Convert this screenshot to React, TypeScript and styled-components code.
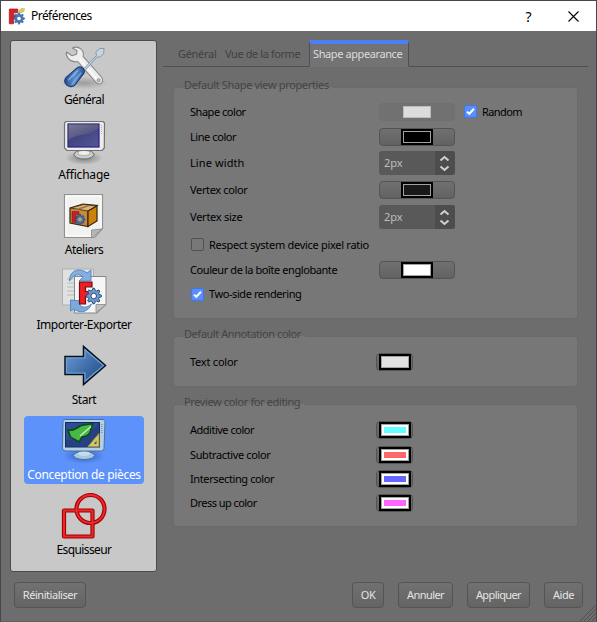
import React from 'react';
import styled, { createGlobalStyle, css } from 'styled-components';

const GlobalStyle = createGlobalStyle`
  * { box-sizing: border-box; }
  html, body { margin: 0; padding: 0; overflow: hidden; }
  body { background: #6d6d6d; }
`;

const uiFont = css`
  font-family: 'Noto Sans', 'Open Sans', sans-serif;
  white-space: nowrap;
`;

const Text = styled.span<{ $ls?: number }>`
  ${uiFont}
  letter-spacing: ${p => p.$ls ?? 0}px;
`;

const Window = styled.div`
  width: 597px;
  height: 622px;
  display: flex;
  flex-direction: column;
  background: #6d6d6d;
  border: 1px solid #48464a;
  border-bottom-color: #606060;
  font-size: 11px;
  line-height: 16px;
  color: #000;
`;

const TitleBar = styled.header`
  height: 30px;
  flex: none;
  display: flex;
  align-items: center;
  background: #fff;
  padding-left: 7px;
  font-size: 12px;
`;

const Title = styled(Text)`
  margin-left: 5px;
  flex: 1;
`;

const CaptionButton = styled.button`
  width: 45px;
  height: 30px;
  padding: 0;
  border: 0;
  background: none;
  display: grid;
  place-items: center;
  font: 14px 'Noto Sans', sans-serif;
  color: #000;
`;

const Content = styled.div`
  height: 541px;
  display: flex;
`;

const Sidebar = styled.nav`
  width: 147px;
  height: 532px;
  margin: 9px 0 0 9px;
  padding: 0 13px;
  border: 1px solid #4b4b4b;
  border-radius: 3px;
  background: #c8c8c8;
`;

const SideItem = styled.div<{ $active?: boolean }>`
  width: 120px;
  height: 68px;
  margin-bottom: 7px;
  display: flex;
  flex-direction: column;
  align-items: center;
  border-radius: 4px;
  background: ${p => (p.$active ? '#5e92fb' : 'transparent')};
  color: ${p => (p.$active ? '#fff' : '#000')};
  font-size: 12px;
  svg { display: block; flex: none; }
  span { margin-top: 3px; }
`;

const Pane = styled.main`
  margin-left: 6px;
  width: 425px;
  padding-top: 9px;
`;

const TabBar = styled.div`
  height: 27px;
  display: flex;
`;

const Tab = styled.div<{ $width: number; $active?: boolean; $pad: number }>`
  width: ${p => p.$width}px;
  padding: ${p => (p.$active ? 2 : 6)}px 0 0 ${p => p.$pad}px;
  color: ${p => (p.$active ? '#dcdcdc' : '#414141')};
  border-bottom: 1px solid ${p => (p.$active ? 'transparent' : '#4f4f4f')};
  ${p => p.$active && css`
    border-top: 4px solid #4b7ff2;
    border-left: 1px solid #4f4f4f;
    border-right: 1px solid #4f4f4f;
    background: #737373;
  `}
`;

const TabRest = styled.div`
  flex: 1;
  border-bottom: 1px solid #4f4f4f;
`;

const Groups = styled.div`
  padding: 10px 10px 0;
  display: flex;
  flex-direction: column;
`;

const GroupTitle = styled.div`
  height: 16px;
  padding-left: 11px;
  color: #444;
`;

const Group = styled.section`
  margin-bottom: 7px;
`;

const GroupBox = styled.div<{ $height: number; $top: number }>`
  height: ${p => p.$height}px;
  margin-top: -6px;
  padding: ${p => p.$top}px 0 0 16px;
  border: 1px solid #6a6a6a;
  border-radius: 3px;
  background: #777;
`;

const TitleBack = styled.span`
  display: inline-block;
  position: relative;
  height: 16px;
  padding-right: 4px;
  z-index: 1;
  background: linear-gradient(#6d6d6d 10px, #777 10px, #777 12px, transparent 12px);
`;

const Row = styled.div<{ $height: number; $small?: boolean }>`
  height: ${p => p.$height}px;
  display: grid;
  grid-template-columns: ${p => (p.$small ? 186 : 189)}px auto auto 1fr;
  align-items: center;
`;

const ColorButton = styled.div<{ $small?: boolean; $disabled?: boolean }>`
  width: ${p => (p.$small ? 37 : 76)}px;
  height: 18px;
  display: grid;
  place-items: center;
  border: 1px solid ${p => (p.$disabled ? '#707070' : '#545454')};
  border-radius: 4px;
  background: ${p => (p.$disabled ? '#717171' : 'linear-gradient(#707070, #626262)')};
`;

const Swatch = styled.div<{ $color: string; $plain?: boolean; $inset?: boolean }>`
  width: ${p => (p.$plain ? 28 : 32)}px;
  height: ${p => (p.$plain ? 12 : 16)}px;
  border: ${p => (p.$plain ? '1px solid #bcbcbc' : '2px solid #000')};
  background: ${p => p.$color};
  box-shadow: ${p => (p.$plain ? 'none' : 'inset 0 0 0 1px #a2a2a2')};
  ${p => p.$inset && css`
    box-shadow: inset 0 0 0 1px #a2a2a2, inset 0 0 0 3px #fff;
  `}
`;

const Spin = styled.div`
  width: 76px;
  height: 24px;
  display: flex;
  overflow: hidden;
  border-radius: 3px;
  background: #595959;
  color: #bebebe;
  & > span { width: 56px; padding: 4px 0 0 5px; }
`;

const SpinButtons = styled.div`
  width: 20px;
  background: #4d4d4d;
  svg { display: block; }
`;

const CheckRow = styled.label<{ $height: number }>`
  height: ${p => p.$height}px;
  padding-left: 1px;
  display: flex;
  align-items: center;
  gap: 5px;
`;

const InlineCheck = styled.label`
  display: flex;
  align-items: center;
  gap: 5px;
  margin-left: 9px;
`;

const Box = styled.span<{ $on?: boolean }>`
  width: 13px;
  height: 13px;
  border: 1px solid ${p => (p.$on ? '#3f77ee' : '#525252')};
  border-radius: 2px;
  background: ${p => (p.$on ? '#5a8efa' : '#787878')};
  svg { display: block; }
`;

const Footer = styled.footer`
  display: flex;
  padding: 10px 0 0 13px;
  height: 49px;
`;

const Button = styled.button<{ $width: number; $left?: number }>`
  width: ${p => p.$width}px;
  height: 26px;
  margin-left: ${p => p.$left ?? 0}px;
  padding: 0;
  border: 1px solid #545454;
  border-radius: 4px;
  background: linear-gradient(#717171, #646464);
  color: #e4e4e4;
  font-size: 11px;
  line-height: 16px;
`;

const Grip = styled.svg`
  align-self: flex-end;
  margin-left: -3px;
`;

const gear = (cx: number, cy: number, r: number) => {
  const pts: string[] = [];
  for (let i = 0; i < 32; i++) {
    const a = ((i - 0.5) / 32) * Math.PI * 2;
    const k = i % 4 < 2 ? r : r * 0.72;
    pts.push(`${(cx + Math.cos(a) * k).toFixed(2)},${(cy + Math.sin(a) * k).toFixed(2)}`);
  }
  return pts.join(' ');
};

const AppIcon = () => (
  <svg width="18" height="18" viewBox="0 0 18 18">
    <path d="M1.300 2h8.500v3.800H5.500v2.400h4v3.200h-4v5.400H1.300z" fill="#d4222a" stroke="#a3151c" strokeWidth=".7" />
    <path d="M10.500 4l3-2.700 3.200.5-1 3-3.500 1.200z" fill="#d9cf55" stroke="#b8ad48" strokeWidth=".5" />
    <polygon points={gear(11, 11.500, 5.700)} fill="#4878b4" stroke="#345f96" strokeWidth=".5" />
    <circle cx="11" cy="11.500" r="1.800" fill="#fff" />
  </svg>
);

const ToolsIcon = () => (
  <svg width="48" height="48" viewBox="0 0 48 48">
    <defs>
      <radialGradient id="toolShade"><stop offset="0" stopColor="#777" stopOpacity=".55" /><stop offset="1" stopColor="#777" stopOpacity="0" /></radialGradient>
      <linearGradient id="handle" x2="1"><stop offset="0" stopColor="#234f91" /><stop offset=".5" stopColor="#5e91d0" /><stop offset="1" stopColor="#2b5797" /></linearGradient>
    </defs>
    <ellipse cx="24" cy="42" rx="24" ry="6" fill="url(#toolShade)" />
    <path d="M12.500 7.200C14 5.800 18 5.500 20.700 7.800c2.400 2 3.200 5 2.400 7.600L41.400 36c2.400 3 1.300 6-1.200 6.800-1.800.5-3.300-.3-4.500-1.700L17.600 20.500c-3.200.8-7-.3-9.200-2.800C6.500 15.500 6 13 6.500 11l5.500 3.700 4.600-1.500.4-3.800z" fill="#eee" stroke="#888" strokeWidth="1.100" strokeLinejoin="round" />
    <path d="M20 18.500L37 38.500" stroke="#fff" strokeWidth="1.200" />
    <circle cx="38.700" cy="39.300" r="1.700" fill="#bbb" stroke="#888" strokeWidth=".7" />
    <path d="M23.500 28L36.500 14.500l-.7-3.600 4.300-3.500 4 .2-.5 5-3.500 3.500-3-.2L25 29.500z" fill="#c6d5e1" stroke="#7f93a5" strokeWidth=".9" />
    <path d="M16.500 27.500c2.500-2.700 5-1.500 6.600 0 1.700 1.700 2 3.700-.1 6L15 43.800c-2.500 3-6.500 1.800-8.500 0-2.300-2-2.500-4.800-.3-7.300z" fill="url(#handle)" stroke="#1d417c" strokeWidth="1.200" />
    <path d="M18 29.500L8.500 39M21 32l-9 11" stroke="#9bc0ec" strokeWidth="1.100" strokeLinecap="round" opacity=".8" />
  </svg>
);

const MonitorIcon = ({ design }: { design?: boolean }) => (
  <svg width="48" height="48" viewBox="0 0 48 48">
    <defs>
      <linearGradient id="screen" x2="1" y2="1"><stop offset="0" stopColor="#36376f" /><stop offset="1" stopColor="#54569a" /></linearGradient>
      <linearGradient id="glare" x2=".8" y2="1"><stop offset="0" stopColor="#777891" /><stop offset="1" stopColor="#45467e" /></linearGradient>
      <radialGradient id="monShade"><stop offset="0" stopColor="#333" stopOpacity=".5" /><stop offset="1" stopColor="#333" stopOpacity="0" /></radialGradient>
      <radialGradient id="designShade"><stop offset="0" stopColor="#1c3f8c" stopOpacity=".6" /><stop offset="1" stopColor="#1c3f8c" stopOpacity="0" /></radialGradient>
    </defs>
    {design ? (
      <>
        <ellipse cx="24" cy="40" rx="21" ry="8" fill="url(#designShade)" />
        <ellipse cx="24" cy="39.500" rx="10.500" ry="4" fill="#a9c7e4" stroke="#416f9f" />
        <ellipse cx="24" cy="37.500" rx="6" ry="2.500" fill="#c5dcef" />
        <path d="M4.500 3.500h39l1.500 2-1 27.500-2 2H5l-2.500-2 .5-27.500z" fill="#b4cfe5" stroke="#4a7196" />
        <rect x="5.500" y="6.500" width="34" height="24.500" fill="#2e4c8e" stroke="#0c2a6c" />
        <path d="M6 24c12-1 25-7 33-17v23.500H6z" fill="#1d3570" opacity=".5" />
        <path d="M8 14c4 1 8-1 12-4 5-2 10-1.500 13-2.500l-2 5.500c-.5 5-4 7.500-9 8l-3 5c-2-2-6-3-8.500-5z" fill="#47b944" stroke="#0b4a1c" strokeWidth="1.600" />
        <path d="M20 20L31 10.500" stroke="#d0f2c2" strokeWidth="1.200" />
        <path d="M28 30.500L39 17.500v13z" fill="#d8c956" stroke="#9f9340" />
        <path d="M34 28l2.500-3.500V28z" fill="#31508c" />
        <path d="M41.800 8v10" stroke="#5f7f9d" strokeDasharray="1 1" />
      </>
    ) : (
      <>
        <ellipse cx="24" cy="42" rx="19" ry="7" fill="url(#monShade)" />
        <ellipse cx="24" cy="38.500" rx="10" ry="4.500" fill="#c9cbc8" stroke="#6c6e6b" />
        <ellipse cx="24" cy="37" rx="6" ry="2.500" fill="#eee" stroke="#999" strokeWidth=".6" />
        <path d="M6 5.500h37l1.500 1.500-.2 25-2.300 2.500H7L4.500 32V7z" fill="#ececea" stroke="#70726f" strokeWidth="1.200" />
        <rect x="8" y="8" width="31" height="23" fill="url(#screen)" stroke="#242584" strokeWidth="1.200" />
        <path d="M8.500 8.500h30v3.500C28 21 21 16 8.500 24z" fill="url(#glare)" />
        <path d="M41.500 9v10" stroke="#aaa" strokeDasharray="1 1" />
      </>
    )}
  </svg>
);

const BoxIcon = () => (
  <svg width="48" height="48" viewBox="0 0 48 48">
    <path d="M4.500 3.500h38v34l-8 9h-30z" fill="#f2f2f1" stroke="#919191" strokeWidth="1.200" />
    <path d="M6 5h35v31.500L33.500 45H6z" fill="none" stroke="#fff" />
    <path d="M42 38L31.500 47v-8z" fill="#b5b7b4" stroke="#888" strokeWidth=".8" />
    <path d="M10 17l13-4 14 1.500-9 5.500v15.500l-18-3.500z" fill="#c58a3e" stroke="#352511" strokeWidth="1.200" />
    <path d="M10.500 17l13-3.500 13 1.500-8.500 5z" fill="#e1b374" stroke="#352511" strokeWidth=".8" />
    <path d="M28 20l9-5v15l-9 5.500z" fill="#cc8108" stroke="#352511" strokeWidth="1.200" />
    <path d="M17 18.500l12-4" stroke="#9e7341" strokeWidth="1.500" />
    <path d="M12 20.500h7v3h-3.500v2h3v3h-3V32L12 31z" fill="#d01d22" stroke="#771314" strokeWidth=".5" />
    <polygon points={gear(20, 28.500, 5)} fill="#4b78b4" stroke="#213a68" strokeWidth=".8" />
    <circle cx="20" cy="28.500" r="1.800" fill="#d99c4d" />
  </svg>
);

const ImportIcon = () => (
  <svg width="48" height="48" viewBox="0 0 48 48">
    <path d="M2.500 3h31v36h-31z" fill="#e0e1e1" stroke="#aeb0af" />
    <path d="M7 13h8M7 17h8M7 21h8M7 25h8M7 29h8" stroke="#babcbc" strokeWidth="1.200" />
    <path d="M14.500 10.500h31.500v28l-9 8.500H14.500z" fill="#f6f6f6" stroke="#868886" />
    <path d="M46 38.500l-10 8v-8z" fill="#c1c2bf" stroke="#878a85" strokeWidth=".8" />
    <path d="M9.500 15C9 5 19 .5 27 7l4-3v11H19l4-4c-4-4-9-3-13.500 4z" fill="#82afe0" stroke="#4f83bf" strokeWidth=".9" />
    <path d="M10.500 34v11l3-2c7 5 15 3 18-5-5 4-8 4-12 1l3-4z" fill="#7daadd" stroke="#4f83bf" strokeWidth=".9" />
    <path d="M19.500 16H32v5h-6.500v4.500H31v5h-5.500V38h-6z" fill="#ee1e24" stroke="#6d1114" strokeWidth="1.200" />
    <polygon points={gear(33.700, 30, 7.800)} fill="#7099cc" stroke="#234a7d" strokeWidth="1" />
    <circle cx="33.700" cy="30" r="2.800" fill="#fff" stroke="#234a7d" />
  </svg>
);

const StartIcon = () => (
  <svg width="48" height="48" viewBox="0 0 48 48">
    <defs><linearGradient id="arrow" x2="1" y2=".8"><stop offset="0" stopColor="#6d9fd7" /><stop offset="1" stopColor="#204a87" /></linearGradient></defs>
    <path d="M5 15.500h18.500V5.500L45.500 24.500 23.500 43.500V33.500H5z" fill="url(#arrow)" stroke="#071018" strokeWidth="1.500" />
    <path d="M6.500 17H25V8.800L43.500 24.500 25 40.200V32H6.500z" fill="none" stroke="#6e9fd6" strokeWidth="1.200" />
  </svg>
);

const SketchIcon = () => (
  <svg width="48" height="48" viewBox="0 0 48 48">
    <g fill="none" stroke="#a20004" strokeWidth="4.200" strokeLinejoin="round">
      <rect x="4" y="19.500" width="28.500" height="26" /><circle cx="30.500" cy="18" r="14" />
    </g>
    <g fill="none" stroke="#ef2929" strokeWidth="1.900">
      <rect x="4" y="19.500" width="28.500" height="26" /><circle cx="30.500" cy="18" r="14" />
    </g>
  </svg>
);

const Check = ({ on }: { on?: boolean }) => (
  <Box $on={on}>
    {on && <svg width="11" height="11" viewBox="0 0 11 11"><path d="M2 5.600l2.300 2.200L9 2.800" fill="none" stroke="#fff" strokeWidth="2" /></svg>}
  </Box>
);

const SpinBox = () => (
  <Spin>
    <Text $ls={-0.1}>2px</Text>
    <SpinButtons>
      <svg width="20" height="24" viewBox="0 0 20 24"><path d="M5.500 9.500l4-3.500 4 3.500M5.500 15.500l4 3.500 4-3.500" fill="none" stroke="#d0d0d0" strokeWidth="2" /></svg>
    </SpinButtons>
  </Spin>
);

const items: [string, React.ReactNode, number][] = [
  ['Général', <ToolsIcon />, -0.6],
  ['Affichage', <MonitorIcon />, -0.2],
  ['Ateliers', <BoxIcon />, -0.5],
  ['Importer-Exporter', <ImportIcon />, -0.5],
  ['Start', <StartIcon />, -0.5],
  ['Conception de pièces', <MonitorIcon design />, -0.33],
  ['Esquisseur', <SketchIcon />, -0.6],
];

const previews: [string, string, number, number][] = [
  ['Additive color', '#66ffff', 25, -0.49],
  ['Subtractive color', '#ff6666', 25, -0.38],
  ['Intersecting color', '#6666ff', 24, -0.39],
  ['Dress up color', '#ff66ff', 24, -0.55],
];

export default function App() {
  return (
    <>
      <GlobalStyle />
      <Window>
        <TitleBar>
          <AppIcon />
          <Title $ls={-0.55}>Préférences</Title>
          <CaptionButton>?</CaptionButton>
          <CaptionButton>
            <svg width="11" height="11" viewBox="0 0 11 11"><path d="M.5.5l10 10M10.500.5l-10 10" stroke="#000" strokeWidth="1.100" /></svg>
          </CaptionButton>
        </TitleBar>
        <Content>
          <Sidebar>
            {items.map(([name, icon, ls]) => (
              <SideItem key={name} $active={name === 'Conception de pièces'}>
                {icon}
                <Text $ls={ls}>{name}</Text>
              </SideItem>
            ))}
          </Sidebar>
          <Pane>
            <TabBar>
              <Tab $width={56} $pad={15}><Text $ls={-0.3}>Général</Text></Tab>
              <Tab $width={90} $pad={6}><Text $ls={-0.42}>Vue de la forme</Text></Tab>
              <Tab $width={100} $pad={3} $active><Text $ls={-0.4}>Shape appearance</Text></Tab>
              <TabRest />
            </TabBar>
            <Groups>
              <Group>
                <GroupTitle><TitleBack><Text $ls={-0.35}>Default Shape view properties</Text></TitleBack></GroupTitle>
                <GroupBox $height={232} $top={11}>
                  <Row $height={25}>
                    <Text $ls={-0.47}>Shape color</Text>
                    <ColorButton $disabled><Swatch $color="#dcdcdc" $plain /></ColorButton>
                    <InlineCheck><Check on /><Text $ls={-0.6}>Random</Text></InlineCheck>
                  </Row>
                  <Row $height={25}><Text $ls={-0.43}>Line color</Text><ColorButton><Swatch $color="#000" /></ColorButton></Row>
                  <Row $height={28}><Text $ls={0.1}>Line width</Text><SpinBox /></Row>
                  <Row $height={26}><Text $ls={-0.35}>Vertex color</Text><ColorButton><Swatch $color="#191919" /></ColorButton></Row>
                  <Row $height={28}><Text $ls={-0.25}>Vertex size</Text><SpinBox /></Row>
                  <CheckRow $height={27}><Check /><Text $ls={-0.29}>Respect system device pixel ratio</Text></CheckRow>
                  <Row $height={23}><Text $ls={-0.42}>Couleur de la boîte englobante</Text><ColorButton><Swatch $color="#fff" /></ColorButton></Row>
                  <CheckRow $height={26}><Check on /><Text $ls={-0.42}>Two-side rendering</Text></CheckRow>
                </GroupBox>
              </Group>
              <Group>
                <GroupTitle><TitleBack><Text $ls={-0.43}>Default Annotation color</Text></TitleBack></GroupTitle>
                <GroupBox $height={51} $top={12}>
                  <Row $height={26} $small><Text $ls={-0.23}>Text color</Text><ColorButton $small><Swatch $color="#e2e2e2" /></ColorButton></Row>
                </GroupBox>
              </Group>
              <Group>
                <GroupTitle><TitleBack><Text $ls={-0.38}>Preview color for editing</Text></TitleBack></GroupTitle>
                <GroupBox $height={123} $top={12}>
                  {previews.map(([name, color, h, ls]) => (
                    <Row key={name} $height={h} $small>
                      <Text $ls={ls}>{name}</Text>
                      <ColorButton $small><Swatch $color={color} $inset /></ColorButton>
                    </Row>
                  ))}
                </GroupBox>
              </Group>
            </Groups>
          </Pane>
        </Content>
        <Footer>
          <Button $width={72}><Text $ls={-0.45}>Réinitialiser</Text></Button>
          <Button $width={32} $left={266}><Text $ls={-0.4}>OK</Text></Button>
          <Button $width={55} $left={14}><Text $ls={-0.55}>Annuler</Text></Button>
          <Button $width={63} $left={14}><Text $ls={-0.6}>Appliquer</Text></Button>
          <Button $width={39} $left={14}><Text $ls={-0.5}>Aide</Text></Button>
          <Grip width="16" height="16" viewBox="0 0 16 16"><path d="M0 16L16 0M4 16L16 4M8 16l8-8M12 16l4-4" stroke="#505050" /></Grip>
        </Footer>
      </Window>
    </>
  );
}
